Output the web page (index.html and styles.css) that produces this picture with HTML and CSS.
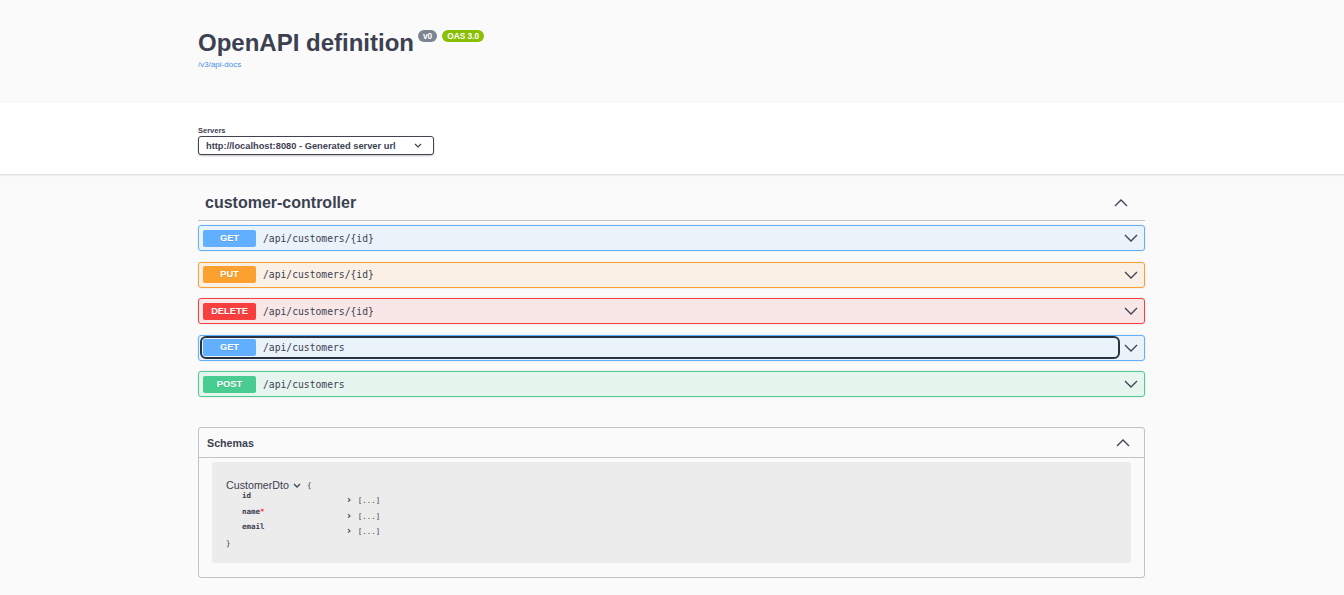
FILE: index.html
```html
<!DOCTYPE html>
<html lang="en">
<head>
<meta charset="utf-8">
<title>Swagger UI</title>
<link rel="stylesheet" href="styles.css">
</head>
<body>
<div class="info-section">
  <div class="wrap">
    <div class="title-row">
      <h1 class="title">OpenAPI definition</h1>
      <span class="badge badge-version">v0</span>
      <span class="badge badge-oas">OAS 3.0</span>
    </div>
    <a class="base-url" href="#">/v3/api-docs</a>
  </div>
</div>

<div class="scheme-container">
  <div class="wrap">
    <div class="servers-label">Servers</div>
    <div class="server-select">
      <span>http://localhost:8080 - Generated server url</span>
      <svg class="select-arrow" width="8" height="5" viewBox="0 0 8 5"><polyline points="1,1 4,4 7,1" fill="none" stroke="#3b4151" stroke-width="1.2"/></svg>
    </div>
  </div>
</div>

<div class="wrap main">
  <div class="tag-header">
    <h3 class="tag-name">customer-controller</h3>
    <svg class="arrow" width="14" height="8" viewBox="0 0 14 8"><polyline points="1,7 7,1 13,7" fill="none" stroke="#3b4151" stroke-width="1.3"/></svg>
  </div>

  <div class="ops">
    <div class="op op-get">
      <div class="summary-control"><span class="method">GET</span><span class="path">/api/customers/{id}</span></div>
      <div class="op-arrow"><svg width="14" height="8" viewBox="0 0 14 8"><polyline points="1,1 7,7 13,1" fill="none" stroke="#3b4151" stroke-width="1.3"/></svg></div>
    </div>
    <div class="op op-put">
      <div class="summary-control"><span class="method">PUT</span><span class="path">/api/customers/{id}</span></div>
      <div class="op-arrow"><svg width="14" height="8" viewBox="0 0 14 8"><polyline points="1,1 7,7 13,1" fill="none" stroke="#3b4151" stroke-width="1.3"/></svg></div>
    </div>
    <div class="op op-delete">
      <div class="summary-control"><span class="method">DELETE</span><span class="path">/api/customers/{id}</span></div>
      <div class="op-arrow"><svg width="14" height="8" viewBox="0 0 14 8"><polyline points="1,1 7,7 13,1" fill="none" stroke="#3b4151" stroke-width="1.3"/></svg></div>
    </div>
    <div class="op op-get">
      <div class="summary-control focused"><span class="method">GET</span><span class="path">/api/customers</span></div>
      <div class="op-arrow"><svg width="14" height="8" viewBox="0 0 14 8"><polyline points="1,1 7,7 13,1" fill="none" stroke="#3b4151" stroke-width="1.3"/></svg></div>
    </div>
    <div class="op op-post">
      <div class="summary-control"><span class="method">POST</span><span class="path">/api/customers</span></div>
      <div class="op-arrow"><svg width="14" height="8" viewBox="0 0 14 8"><polyline points="1,1 7,7 13,1" fill="none" stroke="#3b4151" stroke-width="1.3"/></svg></div>
    </div>
  </div>

  <section class="models">
    <div class="models-header">
      <h4>Schemas</h4>
      <svg class="arrow" width="14" height="8" viewBox="0 0 14 8"><polyline points="1,7 7,1 13,7" fill="none" stroke="#3b4151" stroke-width="1.3"/></svg>
    </div>
    <div class="model-container">
      <div class="model-title">
        <span class="model-name">CustomerDto</span>
        <svg class="model-toggle" width="8" height="5" viewBox="0 0 8 5"><polyline points="1,1 4,4 7,1" fill="none" stroke="#3b4151" stroke-width="1.3"/></svg>
        <span class="brace">{</span>
      </div>
      <table class="props">
        <tr><td class="prop-name">id</td><td class="prop-val"><span class="caret">›</span> [...]</td></tr>
        <tr><td class="prop-name">name<span class="star">*</span></td><td class="prop-val"><span class="caret">›</span> [...]</td></tr>
        <tr><td class="prop-name">email</td><td class="prop-val"><span class="caret">›</span> [...]</td></tr>
      </table>
      <div class="brace close">}</div>
    </div>
  </section>
</div>
</body>
</html>
```

FILE: styles.css
```css
* { box-sizing: border-box; }

body {
  margin: 0;
  background: #fafafa;
  font-family: "Liberation Sans", Arial, sans-serif;
  color: #3b4151;
}

.wrap {
  width: 947px;
  margin: 0 0 0 198px;
}

/* info */
.info-section {
  height: 103px;
  padding-top: 28px;
}

.title-row {
  display: flex;
  align-items: flex-start;
}

.title {
  margin: 0;
  font-size: 24px;
  font-weight: bold;
  line-height: 29px;
  color: #3b4151;
}

.badge {
  margin-top: 2px;
  margin-left: 4px;
  padding: 2px 5px;
  border-radius: 6px;
  font-size: 8.3px;
  line-height: 8px;
  font-weight: bold;
  color: #fff;
}

.badge-version { background: #7d8492; }
.badge-oas { background: #89bf04; margin-left: 5px; }

.base-url {
  display: block;
  margin-top: 3px;
  font-size: 8px;
  color: #4990e2;
  text-decoration: none;
}

/* servers */
.scheme-container {
  background: #fff;
  box-shadow: 0 1px 2px 0 rgba(0, 0, 0, 0.15);
  padding: 23px 0 19px;
}

.servers-label {
  font-size: 7.5px;
  font-weight: bold;
  line-height: 9px;
  margin-bottom: 1px;
}

.server-select {
  display: flex;
  align-items: center;
  justify-content: space-between;
  width: 236px;
  height: 19px;
  padding: 0 11px 0 7px;
  border: 1.3px solid #41444e;
  border-radius: 3px;
  font-size: 9.3px;
  font-weight: bold;
  box-shadow: 0 1px 2px 0 rgba(0, 0, 0, 0.25);
  background: #fff;
}

/* main */
.main {
  padding-top: 16px;
}

.tag-header {
  display: flex;
  align-items: center;
  justify-content: space-between;
  height: 31px;
  padding: 0 17px 4px 7px;
  border-bottom: 1px solid rgba(59, 65, 81, 0.3);
  margin-bottom: 4px;
}

.tag-name {
  margin: 0;
  font-size: 16px;
  font-weight: bold;
}

.ops {
  display: flex;
  flex-direction: column;
  gap: 10.5px;
}

.op {
  display: flex;
  align-items: center;
  height: 26px;
  padding: 0 3px 0 4px;
  border: 1px solid;
  border-radius: 3px;
  box-shadow: 0 0 2px rgba(0, 0, 0, 0.12);
}

.op-get { background: rgba(97, 175, 254, 0.1); border-color: #61affe; }
.op-put { background: rgba(252, 161, 48, 0.1); border-color: #fca130; }
.op-delete { background: rgba(249, 62, 62, 0.1); border-color: #f93e3e; }
.op-post { background: rgba(73, 204, 144, 0.1); border-color: #49cc90; }

.op-get .method { background: #61affe; }
.op-put .method { background: #fca130; }
.op-delete .method { background: #f93e3e; }
.op-post .method { background: #49cc90; }

.summary-control {
  flex: 1;
  display: flex;
  align-items: center;
  height: 17px;
  border-radius: 3px;
}

.summary-control.focused {
  outline: 2px solid #283243;
  outline-offset: 1px;
}

.method {
  width: 53px;
  height: 17px;
  line-height: 17px;
  border-radius: 2px;
  text-align: center;
  font-size: 9.3px;
  font-weight: bold;
  color: #fff;
  text-shadow: 0 1px 0 rgba(0, 0, 0, 0.1);
}

.path {
  margin-left: 7px;
  font-family: "DejaVu Sans Mono", "Liberation Mono", monospace;
  font-size: 9.7px;
  color: #3b4151;
}

.op-arrow {
  width: 24px;
  display: flex;
  justify-content: center;
  padding-left: 3px;
}

.op-arrow svg { display: block; }

/* schemas */
.models {
  margin-top: 30px;
  border: 1px solid rgba(59, 65, 81, 0.3);
  border-radius: 3px;
  padding-bottom: 14px;
}

.models-header {
  display: flex;
  align-items: center;
  justify-content: space-between;
  height: 30px;
  padding: 0 14px 0 8px;
  border-bottom: 1px solid rgba(59, 65, 81, 0.3);
}

.models-header h4 {
  margin: 0;
  font-size: 10.7px;
  font-weight: bold;
}

.model-container {
  margin: 4px 13px 0;
  background: #ececec;
  border-radius: 3px;
  padding: 17px 14px 15px;
}

.model-title {
  display: flex;
  align-items: center;
  gap: 4px;
}

.model-name {
  font-size: 10.7px;
  color: #3b4151;
}

.model-toggle { margin-top: 1px; }

.brace {
  font-family: "DejaVu Sans Mono", monospace;
  font-size: 7.5px;
  color: #3b4151;
  margin-left: 2px;
}

.brace.close {
  margin-left: 0;
  margin-top: 1px;
}

.props {
  border-collapse: collapse;
  margin-left: 16px;
}

.props td {
  padding: 0;
  font-family: "DejaVu Sans Mono", monospace;
  font-size: 7.5px;
  color: #3b4151;
}

.prop-name {
  width: 105px;
  vertical-align: top;
  font-weight: bold;
  height: 15.7px;
}

.prop-val {
  vertical-align: top;
  padding-top: 5px !important;
}

.caret {
  font-family: "DejaVu Sans", sans-serif;
  font-weight: bold;
  font-size: 10px;
  line-height: 7px;
  margin-right: 2px;
}

.star { color: #f93e3e; }
```
